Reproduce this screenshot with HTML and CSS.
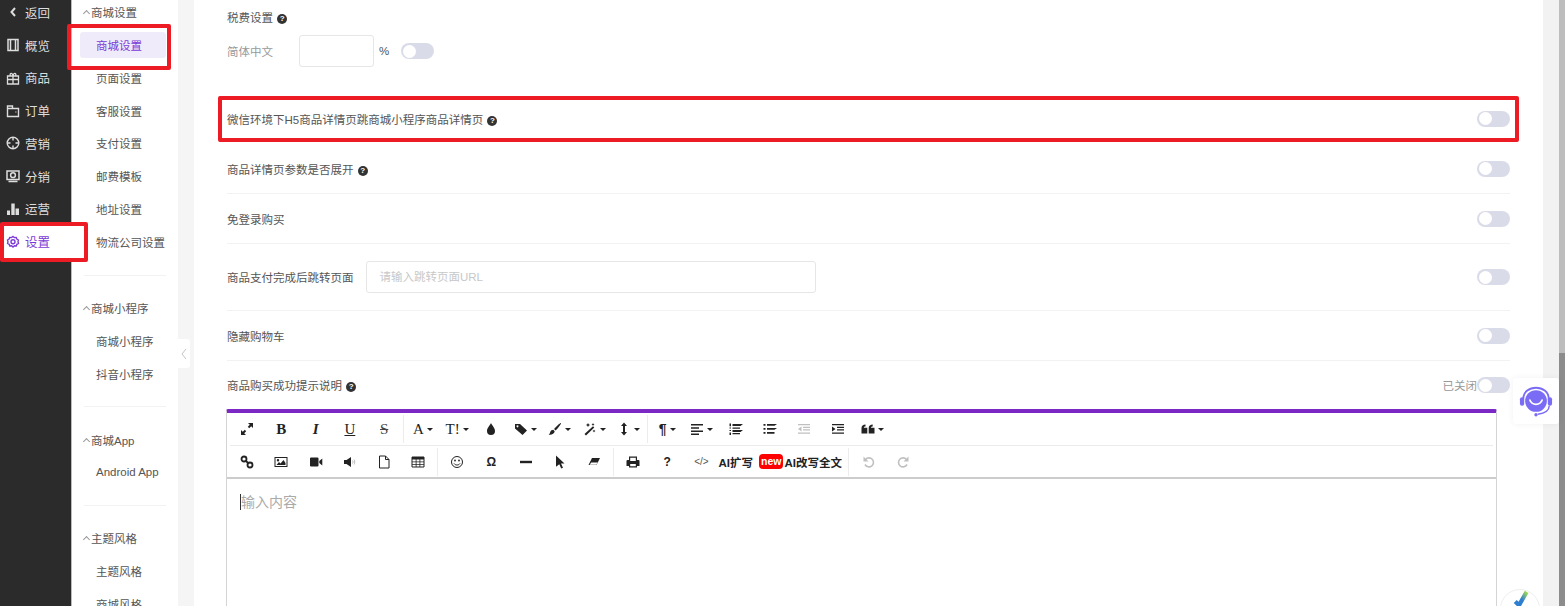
FILE: index.html
```html
<!DOCTYPE html>
<html lang="zh-CN">
<head>
    <meta charset="UTF-8">
    <meta name="viewport" content="width=device-width, initial-scale=1.0">
    <link rel="stylesheet" href="styles.css">
    <title>商城设置</title>
</head>
<body>
    <svg class="sprite" xmlns="http://www.w3.org/2000/svg">
        <symbol id="i-expand" viewBox="0 0 14 14"><path d="M8 1h5v5l-1.800-1.800-2 2-1.400-1.400 2-2zM6 13H1V8l1.800 1.800 2-2 1.400 1.400-2 2z"/></symbol>
        <symbol id="i-drop" viewBox="0 0 14 14"><path d="M7 1c1 2.500 4 4.700 4 8a4 4 0 0 1-8 0c0-3.300 3-5.500 4-8z"/></symbol>
        <symbol id="i-tag" viewBox="0 0 14 14"><path d="M1 2h5l7 6.500L8.500 13 1 6.500zM3.500 3.300a1 1 0 1 0 .01 0z" fill-rule="evenodd"/></symbol>
        <symbol id="i-brush" viewBox="0 0 14 14"><path d="M13 1c.6.500-3 5.300-5.300 7.500L6 7c2-2.400 6.400-6.600 7-6zM5.300 7.800l1.400 1.500C6.500 12 3 13.300.6 12.600c1.500-.8 1.300-2.300 2-3.400.5-.9 1.500-1.300 2.700-1.400z"/></symbol>
        <symbol id="i-wand" viewBox="0 0 14 14"><path d="M10 4.300l1.300 1.300L3 13.500 1.500 12zM5 1l.7 1.300L7 3l-1.300.7L5 5l-.7-1.300L3 3l1.300-.7zM11 7.500l.5 1 1 .5-1 .5-.5 1-.5-1-1-.5 1-.5zM10 1l.5 1 1 .5-1 .5-.5 1-.5-1-1-.5 1-.5z"/></symbol>
        <symbol id="i-height" viewBox="0 0 14 14"><path d="M7 .5L10 4H8v6h2l-3 3.500L4 10h2V4H4z"/></symbol>
        <symbol id="i-align" viewBox="0 0 14 14"><path d="M1 2h12v1.500H1zM1 5.200h8v1.500H1zM1 8.400h12v1.500H1zM1 11.500h8V13H1z"/></symbol>
        <symbol id="i-ol" viewBox="0 0 14 14"><path d="M.5 1.500H2v2.800H.5zM.5 5.500H2v1H.5zM.5 8H2v1H.5zM.5 10.500H2V13H.5zM3.500 2H14l-2.500 2h-8zM3.500 5.500H11v1.200H3.500zM3.500 8H14l-2.500 2h-8zM3.500 11H11v1.200H3.500z"/></symbol>
        <symbol id="i-ul" viewBox="0 0 14 14"><path d="M.5 2h2v1.800h-2zM.5 6h2v1.800h-2zM.5 10h2v1.800h-2zM4 2h10l-2.500 1.800H4zM4 6h10l-2.500 1.800H4zM4 10h7.500v1.800H4z"/></symbol>
        <symbol id="i-outdent" viewBox="0 0 14 14"><path d="M1 2h12v1.300H1zM6 4.700h7V6H6zM6 7.300h7v1.300H6zM1 10.500h12v1.300H1zM4.500 4.500v5L1 7z"/></symbol>
        <symbol id="i-indent" viewBox="0 0 14 14"><path d="M1 2h12v1.300H1zM6 4.700h7V6H6zM6 7.300h7v1.300H6zM1 10.500h12v1.300H1zM1 4.500v5L4.500 7z"/></symbol>
        <symbol id="i-quote" viewBox="0 0 14 14"><path d="M.5 6C.5 3.800 2.200 2.500 4.500 2.500v2c-1 0-1.700.5-1.700 1.300h3.500v5.700H.5zM7.700 6c0-2.200 1.700-3.500 4-3.500v2c-1 0-1.700.5-1.700 1.300h3.500v5.700H7.700z"/></symbol>
        <symbol id="i-link" viewBox="0 0 14 14"><g fill="none" stroke="currentColor" stroke-width="1.800"><circle cx="4" cy="4" r="2.500"/><circle cx="10" cy="10" r="2.500"/><path d="M5.500 5.500l3 3"/></g></symbol>
        <symbol id="i-image" viewBox="0 0 14 14"><path fill-rule="evenodd" d="M.5 2h13v10H.5zM1.500 3v8h11V3zM2.500 10l2.500-3 1.500 1.500L9.500 5l2 3v2zM4 4a1.200 1.200 0 1 1 0 2.400A1.200 1.200 0 0 1 4 4z"/></symbol>
        <symbol id="i-video" viewBox="0 0 14 14"><path d="M1 3.500A1 1 0 0 1 2 2.500h6.500a1 1 0 0 1 1 1v7a1 1 0 0 1-1 1H2a1 1 0 0 1-1-1zM10.300 6l3-2.500v7l-3-2.500z"/></symbol>
        <symbol id="i-audio" viewBox="0 0 14 14"><path d="M1 5h2.500L8 2v10L3.500 9H1z"/><path d="M9.500 5.500c.7 1 .7 2 0 3M11 4.500c1 1.500 1 3.500 0 5" fill="none" stroke="#bbb"/></symbol>
        <symbol id="i-file" viewBox="0 0 14 14"><path d="M2.500 1h6l3.500 3.500V13H2.500zM8.500 1v3.500H12" fill="none" stroke="currentColor"/></symbol>
        <symbol id="i-table" viewBox="0 0 14 14"><path d="M1 2h12v10H1z" fill="none" stroke="currentColor"/><path d="M1 2h12v2.500H1zM1 6.500h12v.8H1zM1 9h12v.8H1zM4.700 4h.8v8h-.8zM8.500 4h.8v8h-.8z"/></symbol>
        <symbol id="i-smile" viewBox="0 0 14 14"><g fill="none" stroke="currentColor"><circle cx="7" cy="7" r="5.500"/><path d="M4 8.500c1.500 2 4.500 2 6 0"/></g><circle cx="5" cy="5.500" r=".9"/><circle cx="9" cy="5.500" r=".9"/></symbol>
        <symbol id="i-hr" viewBox="0 0 14 14"><path d="M1 5.800h12v2.400H1z"/></symbol>
        <symbol id="i-cursor" viewBox="0 0 14 14"><path d="M3 .5l8.500 8H8l2 4.300-1.800.8-1.900-4.300L3 11.800z"/></symbol>
        <symbol id="i-eraser" viewBox="0 0 14 14"><path d="M5 3h8L9.500 10H1.500zM4.200 7.500h6.400l-1.300 2.300H2.600z" fill-rule="evenodd"/></symbol>
        <symbol id="i-print" viewBox="0 0 14 14"><path fill-rule="evenodd" d="M3 1.500h8v3.500h1.500A1 1 0 0 1 13.500 6v5H11v1.500H3V11H.5V6a1 1 0 0 1 1-1H3zM4.200 2.700V6h5.600V2.700zM4.200 9v2.300h5.600V9z"/></symbol>
        <symbol id="i-undo" viewBox="0 0 14 14"><path d="M3.500 4.500A4.500 4.500 0 1 1 3 9.500" fill="none" stroke="currentColor" stroke-width="1.600"/><path d="M1.500 1.500v5h5z"/></symbol>
        <symbol id="i-redo" viewBox="0 0 14 14"><path d="M10.500 4.500A4.500 4.500 0 1 0 11 9.500" fill="none" stroke="currentColor" stroke-width="1.600"/><path d="M12.500 1.500v5h-5z"/></symbol>
    </svg>

    <div class="app">
        <aside class="sidebar">
            <div class="side-list">
                <div class="side-item">
                    <svg class="side-ico" viewBox="0 0 14 14"><path d="M9 3l-3.500 4L9 11" fill="none" stroke="currentColor" stroke-width="2"/></svg>
                    <span>返回</span>
                </div>
                <div class="side-item">
                    <svg class="side-ico" viewBox="0 0 14 14"><path d="M2 1.500h10v11H2zM4.500 1.500v11M9.500 1.500v11" fill="none" stroke="currentColor" stroke-width="1.500"/></svg>
                    <span>概览</span>
                </div>
                <div class="side-item">
                    <svg class="side-ico" viewBox="0 0 14 14"><path d="M1.500 5h11v8h-11zM1.500 8.500h11M7 5v8M4.500 5c-1.500-3 2-4 2.500 0 .5-4 4-3 2.500 0" fill="none" stroke="currentColor" stroke-width="1.300"/></svg>
                    <span>商品</span>
                </div>
                <div class="side-item">
                    <svg class="side-ico" viewBox="0 0 14 14"><path d="M1.500 2h5v2.500h6v8h-11zM6.500 4.500H1.500M9.500 8h.8" fill="none" stroke="currentColor" stroke-width="1.400"/></svg>
                    <span>订单</span>
                </div>
                <div class="side-item">
                    <svg class="side-ico" viewBox="0 0 14 14"><g fill="none" stroke="currentColor" stroke-width="1.400"><circle cx="7" cy="7" r="5.800"/><path d="M7 1.500V4.500M7 9.500v3M1.500 7h3M9.500 7h3"/></g></svg>
                    <span>营销</span>
                </div>
                <div class="side-item">
                    <svg class="side-ico" viewBox="0 0 14 14"><g fill="none" stroke="currentColor" stroke-width="1.500"><path d="M1 2h12v8.500H1zM2.500 12.500h9"/><circle cx="7" cy="6.200" r="2.400"/></g></svg>
                    <span>分销</span>
                </div>
                <div class="side-item">
                    <svg class="side-ico" viewBox="0 0 14 14"><path d="M1 8.500h3V13H1zM5.300 1.500h3.400V13H5.300zM9.500 6.500h3.500V13H9.500z"/></svg>
                    <span>运营</span>
                </div>
                <div class="side-item side-active">
                    <svg class="side-ico" viewBox="0 0 14 14"><g fill="none" stroke="currentColor" stroke-width="1.400"><path d="M7 1.500l1.400 1.100 1.800-.2.600 1.700 1.600.9L12 6.700l.5 1.700-1.600.9-.6 1.700-1.800-.2L7 12l-1.400-1.200-1.800.2-.6-1.700-1.600-.9L2 6.700 1.500 5l1.600-.9.600-1.700 1.800.2z"/><circle cx="7" cy="6.800" r="2"/></g></svg>
                    <span>设置</span>
                </div>
            </div>
        </aside>

        <nav class="subnav">
            <div class="nav-group">
                <div class="nav-head"><i class="nav-caret"></i>商城设置</div>
                <div class="nav-item nav-active"><span>商城设置</span></div>
                <div class="nav-item"><span>页面设置</span></div>
                <div class="nav-item"><span>客服设置</span></div>
                <div class="nav-item"><span>支付设置</span></div>
                <div class="nav-item"><span>邮费模板</span></div>
                <div class="nav-item"><span>地址设置</span></div>
                <div class="nav-item"><span>物流公司设置</span></div>
            </div>
            <div class="nav-group">
                <div class="nav-head"><i class="nav-caret"></i>商城小程序</div>
                <div class="nav-item"><span>商城小程序</span></div>
                <div class="nav-item"><span>抖音小程序</span></div>
            </div>
            <div class="nav-group">
                <div class="nav-head"><i class="nav-caret"></i>商城App</div>
                <div class="nav-item"><span>Android App</span></div>
            </div>
            <div class="nav-group">
                <div class="nav-head"><i class="nav-caret"></i>主题风格</div>
                <div class="nav-item"><span>主题风格</span></div>
                <div class="nav-item"><span>商城风格</span></div>
            </div>
        </nav>

        <div class="gutter">
            <div class="collapse">
                <svg viewBox="0 0 8 14"><path d="M6 2L2 7l4 5" fill="none" stroke="#c4c4c4" stroke-width="1"/></svg>
            </div>
        </div>

        <main class="content">
            <section class="tax">
                <div class="tax-title">税费设置 <i class="help">?</i></div>
                <div class="tax-line">
                    <span class="muted tax-lang">简体中文</span>
                    <div class="input tax-input"></div>
                    <span class="tax-unit">%</span>
                    <div class="switch"></div>
                </div>
            </section>

            <div class="row row-plain">
                <span>微信环境下H5商品详情页跳商城小程序商品详情页 <i class="help">?</i></span>
                <div class="switch"></div>
            </div>
            <div class="row">
                <span>商品详情页参数是否展开 <i class="help">?</i></span>
                <div class="switch"></div>
            </div>
            <div class="row">
                <span>免登录购买</span>
                <div class="switch"></div>
            </div>
            <div class="row row-tall">
                <div class="row-left">
                    <span>商品支付完成后跳转页面</span>
                    <div class="input url-input">请输入跳转页面URL</div>
                </div>
                <div class="switch"></div>
            </div>
            <div class="row">
                <span>隐藏购物车</span>
                <div class="switch"></div>
            </div>
            <div class="row row-plain row-last">
                <span>商品购买成功提示说明 <i class="help">?</i></span>
                <div class="row-right">
                    <span class="muted">已关闭</span>
                    <div class="switch"></div>
                </div>
            </div>

            <div class="editor">
                <div class="toolbar tb-first">
                    <button class="tb"><svg><use href="#i-expand"/></svg></button>
                    <button class="tb tb-txt"><b>B</b></button>
                    <button class="tb tb-txt"><b><em>I</em></b></button>
                    <button class="tb tb-txt"><u>U</u></button>
                    <button class="tb tb-txt"><s>S</s></button>
                    <span class="tb-sep"></span>
                    <button class="tb tb-txt tb-drop">A</button>
                    <button class="tb tb-txt tb-drop">T!</button>
                    <button class="tb"><svg><use href="#i-drop"/></svg></button>
                    <button class="tb tb-drop"><svg><use href="#i-tag"/></svg></button>
                    <button class="tb tb-drop"><svg><use href="#i-brush"/></svg></button>
                    <button class="tb tb-drop"><svg><use href="#i-wand"/></svg></button>
                    <button class="tb tb-drop"><svg><use href="#i-height"/></svg></button>
                    <span class="tb-sep"></span>
                    <button class="tb tb-drop tb-para">¶</button>
                    <button class="tb tb-drop"><svg><use href="#i-align"/></svg></button>
                    <button class="tb"><svg><use href="#i-ol"/></svg></button>
                    <button class="tb"><svg><use href="#i-ul"/></svg></button>
                    <button class="tb tb-off"><svg><use href="#i-outdent"/></svg></button>
                    <button class="tb"><svg><use href="#i-indent"/></svg></button>
                    <button class="tb tb-drop"><svg><use href="#i-quote"/></svg></button>
                </div>
                <div class="toolbar tb-second">
                    <button class="tb"><svg><use href="#i-link"/></svg></button>
                    <button class="tb"><svg><use href="#i-image"/></svg></button>
                    <button class="tb"><svg><use href="#i-video"/></svg></button>
                    <button class="tb"><svg><use href="#i-audio"/></svg></button>
                    <button class="tb"><svg><use href="#i-file"/></svg></button>
                    <button class="tb"><svg><use href="#i-table"/></svg></button>
                    <span class="tb-sep"></span>
                    <button class="tb"><svg><use href="#i-smile"/></svg></button>
                    <button class="tb tb-omega">Ω</button>
                    <button class="tb"><svg><use href="#i-hr"/></svg></button>
                    <button class="tb"><svg><use href="#i-cursor"/></svg></button>
                    <button class="tb"><svg><use href="#i-eraser"/></svg></button>
                    <span class="tb-sep"></span>
                    <button class="tb"><svg><use href="#i-print"/></svg></button>
                    <button class="tb tb-help">?</button>
                    <button class="tb tb-code">&lt;/&gt;</button>
                    <button class="tb-ai tb-ai-first">AI扩写</button>
                    <button class="tb-ai tb-ai-last"><span class="badge-new">new</span>AI改写全文</button>
                    <span class="tb-sep"></span>
                    <button class="tb tb-off"><svg><use href="#i-undo"/></svg></button>
                    <button class="tb tb-off"><svg><use href="#i-redo"/></svg></button>
                </div>
                <div class="editor-body"><span class="caret"></span>输入内容</div>
            </div>
        </main>

        <div class="scrollbar">
            <div class="scroll-track"><div class="scroll-thumb"></div></div>
        </div>
    </div>

    <div class="mark mark-side"></div>
    <div class="mark mark-nav"></div>
    <div class="mark mark-row"></div>

    <div class="service">
        <svg viewBox="0 0 36 36">
            <circle cx="18" cy="18" r="11.500" fill="#7b6cf6"/>
            <path d="M11.500 17c2 6 11 6 13 0" fill="none" stroke="#fff" stroke-width="1.800" stroke-linecap="round"/>
            <path d="M4.500 16C4.500 0 31.500 0 31.500 16" fill="none" stroke="#7b6cf6" stroke-width="2"/>
            <rect x="1" y="14" width="4.500" height="9" rx="2.200" fill="#7b6cf6"/>
            <rect x="30.500" y="14" width="4.500" height="9" rx="2.200" fill="#7b6cf6"/>
            <path d="M32 23c0 5-5 8-12 9" fill="none" stroke="#7b6cf6" stroke-width="1.500"/>
            <circle cx="18" cy="32.500" r="1.800" fill="#7b6cf6"/>
        </svg>
    </div>
    <div class="check-badge">
        <svg viewBox="0 0 40 20">
            <defs>
                <linearGradient id="check-fill" x1="0" y1="1" x2="1" y2="0">
                    <stop offset="0.500" stop-color="#2f7fd0"/>
                    <stop offset="1" stop-color="#a4dc4c"/>
                </linearGradient>
            </defs>
            <path d="M15 12l4 4 8-14" fill="none" stroke="url(#check-fill)" stroke-width="4.500"/>
        </svg>
    </div>
</body>
</html>
```

FILE: styles.css
```css
* {
    box-sizing: border-box;
}

html, body {
    height: 100%;
    margin: 0;
    overflow: hidden;
}

body {
    position: relative;
    font-family: 'Liberation Sans', 'Noto Sans CJK SC', sans-serif;
    font-size: 11.5px;
    color: #555;
    background-color: #fff;
}

.sprite {
    display: none;
}

.app {
    display: flex;
    height: 606px;
}

/* dark left bar */
.sidebar {
    flex: 0 0 72px;
    border-right: 1px solid #bbb;
    background-color: #2b2b2b;
    color: #ddd;
}

.side-list {
    margin-top: -4px;
}

.side-item {
    display: flex;
    align-items: center;
    gap: 5px;
    height: 32.75px;
    padding-left: 6px;
    font-size: 12.5px;
}

.side-ico {
    width: 14px;
    height: 14px;
    fill: currentColor;
}

.side-active {
    margin-right: -1px;
    background-color: #fff;
    color: #7c3bd6;
}

/* second level menu */
.subnav {
    flex: 0 0 106px;
    overflow: hidden;
    padding: 0 12px 0 12px;
    margin-top: -4px;
}

.nav-group {
    padding-bottom: 16px;
    margin-bottom: 16px;
    border-bottom: 1px solid #f2f2f2;
}

.nav-group:first-child {
    padding-bottom: 17px;
}

.nav-head {
    display: flex;
    align-items: center;
    height: 32.75px;
    color: #555;
}

.nav-caret {
    width: 5px;
    height: 5px;
    margin: 3px 2px 0 0;
    border-left: 1px solid #999;
    border-top: 1px solid #999;
    transform: rotate(45deg);
}

.nav-item {
    display: flex;
    align-items: center;
    height: 32.75px;
    padding-left: 12px;
    margin: 0 0 0 -4px;
    border-radius: 3px;
    white-space: nowrap;
}

.nav-item span {
    margin-left: 4px;
}

.nav-active {
    height: 26px;
    margin-top: 3.4px;
    margin-bottom: 3.4px;
    background-color: #f0ebfa;
    color: #7c3bd6;
}

.gutter {
    position: relative;
    flex: 0 0 16px;
    background-color: #f5f5f5;
}

.collapse {
    position: absolute;
    top: 339px;
    left: 0;
    display: flex;
    align-items: center;
    justify-content: center;
    width: 12px;
    height: 29px;
    background-color: #fff;
    border-radius: 0 3px 3px 0;
}

.collapse svg {
    width: 8px;
    height: 14px;
}

/* main panel */
.content {
    flex: 0 0 1349px;
    overflow: hidden;
    padding: 0 33px;
    background-color: #fff;
}

.tax {
    height: 93px;
    padding-top: 10px;
}

.tax-title {
    height: 16px;
    line-height: 16px;
}

.tax-line {
    display: flex;
    align-items: center;
    margin-top: 9px;
}

.tax-lang {
    width: 72px;
}

.input {
    height: 32px;
    border: 1px solid #e6e6e6;
    border-radius: 3px;
}

.tax-input {
    width: 75px;
}

.tax-unit {
    width: 27px;
    padding-left: 5px;
}

.muted {
    color: #999;
}

.help {
    display: inline-block;
    width: 10px;
    height: 10px;
    margin-left: 1px;
    border-radius: 50%;
    background-color: #333;
    color: #fff;
    font-style: normal;
    font-weight: bold;
    font-size: 8px;
    line-height: 10px;
    text-align: center;
    vertical-align: 1px;
}

.switch {
    position: relative;
    flex: 0 0 33px;
    width: 33px;
    height: 16px;
    border-radius: 8px;
    background-color: #d9dce8;
}

.switch::after {
    content: "";
    position: absolute;
    top: 1.5px;
    left: 1.5px;
    width: 13px;
    height: 13px;
    border-radius: 50%;
    background-color: #fff;
}

.row {
    display: flex;
    align-items: center;
    justify-content: space-between;
    height: 50px;
    border-bottom: 1px solid #f2f2f2;
}

.row-plain {
    height: 51px;
    border-bottom: 0;
}

.row-tall {
    height: 67px;
}

.row-last {
    height: 48px;
}

.row-left {
    display: flex;
    align-items: center;
    gap: 12px;
}

.row-right {
    display: flex;
    align-items: center;
}

.url-input {
    width: 450px;
    padding-left: 13px;
    color: #c8c8c8;
    line-height: 30px;
}

/* rich text editor */
.editor {
    width: 1271px;
    height: 260px;
    margin-left: -1px;
    border: 1px solid #d4d4d4;
    border-top: 4px solid #7b28c4;
    border-radius: 2px 2px 0 0;
}

.toolbar {
    display: flex;
    align-items: center;
    height: 32px;
    margin: 0 3px;
}

.tb-first {
    height: 33px;
    border-bottom: 1px solid #ebebeb;
}

.tb-second {
    height: 31px;
}

.tb {
    display: flex;
    align-items: center;
    justify-content: center;
    flex: 0 0 34.25px;
    height: 28px;
    padding: 0;
    border: 0;
    background: none;
    color: #222;
    font-family: 'Liberation Serif', serif;
    font-size: 14px;
}

.tb svg {
    width: 14px;
    height: 14px;
    fill: currentColor;
}

.tb-txt {
    font-size: 15px;
}

.tb-txt s {
    color: #444;
}

.tb-drop::after {
    content: "";
    width: 0;
    height: 0;
    margin-left: 3px;
    border: 3px solid transparent;
    border-top: 3.5px solid #222;
    border-bottom: 0;
}

.tb-para {
    font-family: 'Liberation Sans', sans-serif;
    font-weight: bold;
}

.tb-omega,
.tb-help {
    font-family: 'Liberation Sans', sans-serif;
    font-weight: bold;
    font-size: 12px;
}

.tb-code {
    font-family: 'Liberation Sans', sans-serif;
    font-size: 10px;
    color: #555;
}

.tb-off {
    color: #c0c0c0;
}

.tb-sep {
    flex: 0 0 1px;
    height: 28px;
    margin: 0 2px 0 1.5px;
    background-color: #ececec;
}

.tb-ai {
    display: flex;
    align-items: center;
    flex: none;
    padding: 0;
    border: 0;
    background: none;
    color: #222;
    font-family: 'Liberation Sans', 'Noto Sans CJK SC', sans-serif;
    font-size: 11.5px;
    font-weight: bold;
}

.tb-ai-first {
    margin: 0 6px 0 0;
}

.tb-ai-last {
    margin-right: 5px;
}

.badge-new {
    margin-right: 1px;
    padding: 1px 2px;
    border-radius: 4px;
    background-color: #f00;
    color: #fff;
    font-size: 10.5px;
    line-height: 13px;
}

.editor-body {
    position: relative;
    height: 200px;
    padding: 14px 14px;
    border-top: 2px solid #ccc;
    color: #aaa;
    font-size: 14px;
    line-height: 18px;
}

.caret {
    position: absolute;
    top: 15px;
    left: 13px;
    width: 1px;
    height: 16px;
    background-color: #333;
}

.scrollbar {
    flex: 1;
    display: flex;
    padding-left: 16px;
    padding-right: 3px;
    background: linear-gradient(to right, #f2f2f2 16px, #fff 16px);
}

.scroll-track {
    flex: 1;
    background-color: #bdbdbd;
}

.scroll-thumb {
    height: 100%;
    margin-top: 353px;
    background-color: #8c8c8c;
}

/* red annotation boxes drawn over the screenshot */
.mark {
    position: absolute;
    border: 4px solid #ed1c24;
    border-radius: 2px;
}

.mark-side {
    top: 222px;
    left: 0;
    width: 88px;
    height: 40px;
}

.mark-nav {
    top: 24px;
    left: 67px;
    width: 104px;
    height: 46px;
}

.mark-row {
    top: 96px;
    left: 218px;
    width: 1301px;
    height: 46px;
}

.service {
    position: absolute;
    top: 378px;
    left: 1513px;
    display: flex;
    align-items: center;
    justify-content: center;
    width: 46px;
    height: 46px;
    border-radius: 3px;
    background-color: #fff;
    box-shadow: 0 0 6px rgba(0, 0, 0, 0.06);
}

.service svg {
    width: 34px;
    height: 34px;
}

.check-badge {
    position: absolute;
    top: 589px;
    left: 1500px;
    width: 40px;
    height: 40px;
    border: 1px solid #eee;
    border-radius: 50%;
    background-color: #fff;
}

.check-badge svg {
    display: block;
    width: 38px;
    height: 19px;
}
```
